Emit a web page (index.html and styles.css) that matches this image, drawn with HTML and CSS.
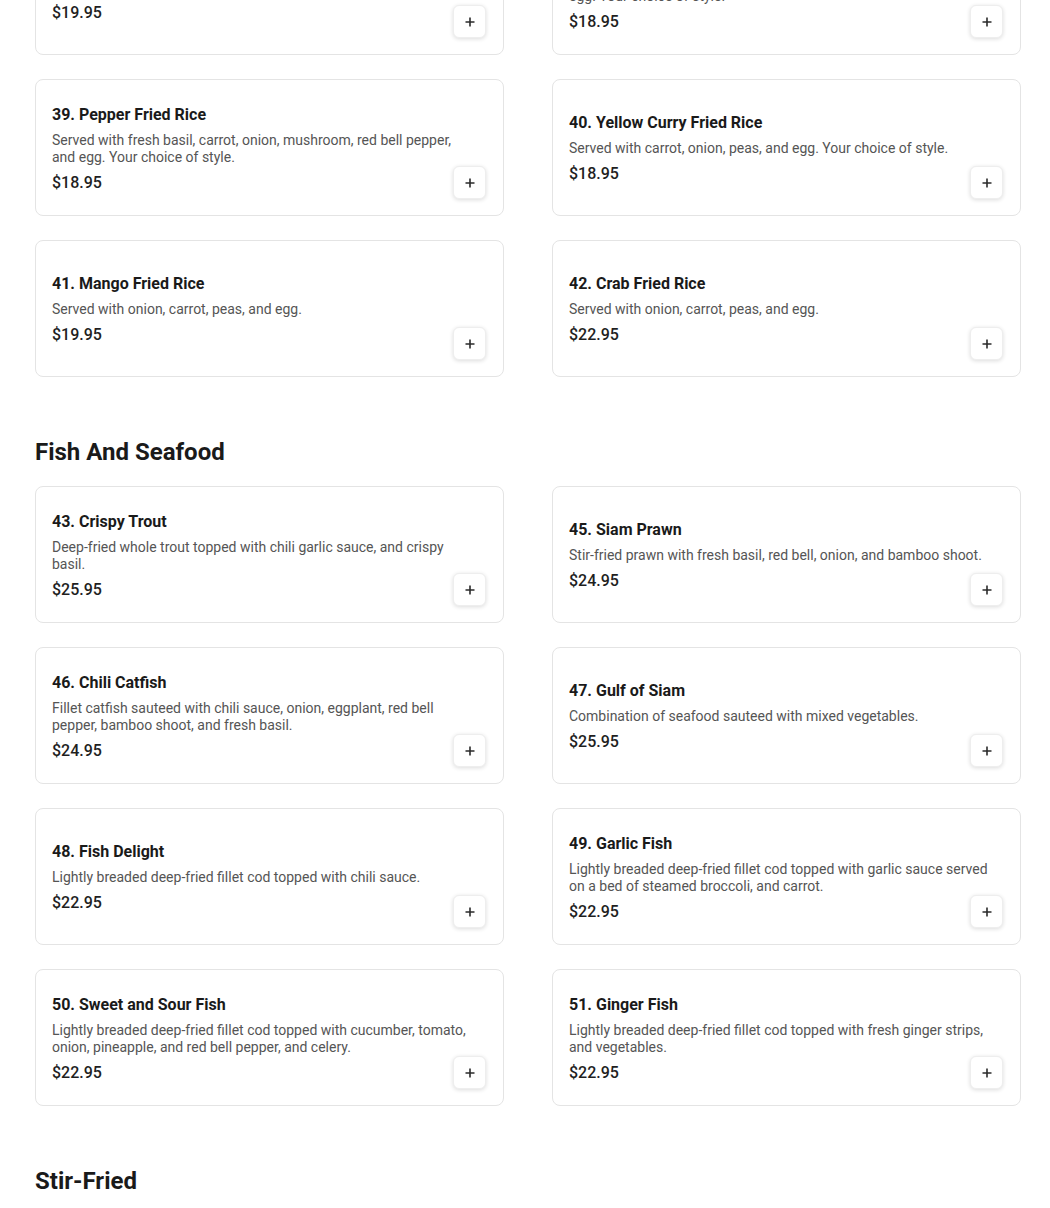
FILE: index.html
```html
<!DOCTYPE html>
<html lang="en">
<head>
<meta charset="utf-8">
<title>Menu</title>
<link rel="stylesheet" href="styles.css">
</head>
<body>
<main class="menu">
  <section class="section section-first">
    <div class="grid">
      <article class="card">
        <div class="info">
          <h3 class="name">37. Pineapple Fried Rice</h3>
          <p class="desc">Served with pineapple, cashew nut, onion, raisin, and egg.</p>
          <p class="price">$19.95</p>
        </div>
        <button class="add" aria-label="Add"><svg viewBox="0 0 12 12" width="12" height="12"><path d="M6 1.5v9M1.5 6h9" stroke="#2b2b2b" stroke-width="1.6" fill="none"/></svg></button>
      </article>
      <article class="card">
        <div class="info">
          <h3 class="name">38. Thai Fried Rice</h3>
          <p class="desc">Served with Chinese broccoli, onion, tomato, carrot, green onion, and egg. Your choice of style.</p>
          <p class="price">$18.95</p>
        </div>
        <button class="add" aria-label="Add"><svg viewBox="0 0 12 12" width="12" height="12"><path d="M6 1.5v9M1.5 6h9" stroke="#2b2b2b" stroke-width="1.6" fill="none"/></svg></button>
      </article>
      <article class="card">
        <div class="info">
          <h3 class="name">39. Pepper Fried Rice</h3>
          <p class="desc">Served with fresh basil, carrot, onion, mushroom, red bell pepper, and egg. Your choice of style.</p>
          <p class="price">$18.95</p>
        </div>
        <button class="add" aria-label="Add"><svg viewBox="0 0 12 12" width="12" height="12"><path d="M6 1.5v9M1.5 6h9" stroke="#2b2b2b" stroke-width="1.6" fill="none"/></svg></button>
      </article>
      <article class="card">
        <div class="info">
          <h3 class="name">40. Yellow Curry Fried Rice</h3>
          <p class="desc">Served with carrot, onion, peas, and egg. Your choice of style.</p>
          <p class="price">$18.95</p>
        </div>
        <button class="add" aria-label="Add"><svg viewBox="0 0 12 12" width="12" height="12"><path d="M6 1.5v9M1.5 6h9" stroke="#2b2b2b" stroke-width="1.6" fill="none"/></svg></button>
      </article>
      <article class="card">
        <div class="info">
          <h3 class="name">41. Mango Fried Rice</h3>
          <p class="desc">Served with onion, carrot, peas, and egg.</p>
          <p class="price">$19.95</p>
        </div>
        <button class="add" aria-label="Add"><svg viewBox="0 0 12 12" width="12" height="12"><path d="M6 1.5v9M1.5 6h9" stroke="#2b2b2b" stroke-width="1.6" fill="none"/></svg></button>
      </article>
      <article class="card">
        <div class="info">
          <h3 class="name">42. Crab Fried Rice</h3>
          <p class="desc">Served with onion, carrot, peas, and egg.</p>
          <p class="price">$22.95</p>
        </div>
        <button class="add" aria-label="Add"><svg viewBox="0 0 12 12" width="12" height="12"><path d="M6 1.5v9M1.5 6h9" stroke="#2b2b2b" stroke-width="1.6" fill="none"/></svg></button>
      </article>
    </div>
  </section>

  <section class="section">
    <h2 class="section-title">Fish And Seafood</h2>
    <div class="grid">
      <article class="card">
        <div class="info">
          <h3 class="name">43. Crispy Trout</h3>
          <p class="desc">Deep-fried whole trout topped with chili garlic sauce, and crispy basil.</p>
          <p class="price">$25.95</p>
        </div>
        <button class="add" aria-label="Add"><svg viewBox="0 0 12 12" width="12" height="12"><path d="M6 1.5v9M1.5 6h9" stroke="#2b2b2b" stroke-width="1.6" fill="none"/></svg></button>
      </article>
      <article class="card">
        <div class="info">
          <h3 class="name">45. Siam Prawn</h3>
          <p class="desc">Stir-fried prawn with fresh basil, red bell, onion, and bamboo shoot.</p>
          <p class="price">$24.95</p>
        </div>
        <button class="add" aria-label="Add"><svg viewBox="0 0 12 12" width="12" height="12"><path d="M6 1.5v9M1.5 6h9" stroke="#2b2b2b" stroke-width="1.6" fill="none"/></svg></button>
      </article>
      <article class="card">
        <div class="info">
          <h3 class="name">46. Chili Catfish</h3>
          <p class="desc">Fillet catfish sauteed with chili sauce, onion, eggplant, red bell pepper, bamboo shoot, and fresh basil.</p>
          <p class="price">$24.95</p>
        </div>
        <button class="add" aria-label="Add"><svg viewBox="0 0 12 12" width="12" height="12"><path d="M6 1.5v9M1.5 6h9" stroke="#2b2b2b" stroke-width="1.6" fill="none"/></svg></button>
      </article>
      <article class="card">
        <div class="info">
          <h3 class="name">47. Gulf of Siam</h3>
          <p class="desc">Combination of seafood sauteed with mixed vegetables.</p>
          <p class="price">$25.95</p>
        </div>
        <button class="add" aria-label="Add"><svg viewBox="0 0 12 12" width="12" height="12"><path d="M6 1.5v9M1.5 6h9" stroke="#2b2b2b" stroke-width="1.6" fill="none"/></svg></button>
      </article>
      <article class="card">
        <div class="info">
          <h3 class="name">48. Fish Delight</h3>
          <p class="desc">Lightly breaded deep-fried fillet cod topped with chili sauce.</p>
          <p class="price">$22.95</p>
        </div>
        <button class="add" aria-label="Add"><svg viewBox="0 0 12 12" width="12" height="12"><path d="M6 1.5v9M1.5 6h9" stroke="#2b2b2b" stroke-width="1.6" fill="none"/></svg></button>
      </article>
      <article class="card">
        <div class="info">
          <h3 class="name">49. Garlic Fish</h3>
          <p class="desc">Lightly breaded deep-fried fillet cod topped with garlic sauce served on a bed of steamed broccoli, and carrot.</p>
          <p class="price">$22.95</p>
        </div>
        <button class="add" aria-label="Add"><svg viewBox="0 0 12 12" width="12" height="12"><path d="M6 1.5v9M1.5 6h9" stroke="#2b2b2b" stroke-width="1.6" fill="none"/></svg></button>
      </article>
      <article class="card">
        <div class="info">
          <h3 class="name">50. Sweet and Sour Fish</h3>
          <p class="desc">Lightly breaded deep-fried fillet cod topped with cucumber, tomato, onion, pineapple, and red bell pepper, and celery.</p>
          <p class="price">$22.95</p>
        </div>
        <button class="add" aria-label="Add"><svg viewBox="0 0 12 12" width="12" height="12"><path d="M6 1.5v9M1.5 6h9" stroke="#2b2b2b" stroke-width="1.6" fill="none"/></svg></button>
      </article>
      <article class="card">
        <div class="info">
          <h3 class="name">51. Ginger Fish</h3>
          <p class="desc">Lightly breaded deep-fried fillet cod topped with fresh ginger strips, and vegetables.</p>
          <p class="price">$22.95</p>
        </div>
        <button class="add" aria-label="Add"><svg viewBox="0 0 12 12" width="12" height="12"><path d="M6 1.5v9M1.5 6h9" stroke="#2b2b2b" stroke-width="1.6" fill="none"/></svg></button>
      </article>
    </div>
  </section>

  <section class="section">
    <h2 class="section-title">Stir-Fried</h2>
  </section>
</main>
</body>
</html>
```

FILE: styles.css
```css
html, body {
  margin: 0;
  padding: 0;
  background: #ffffff;
  overflow: hidden;
}

body {
  font-family: Roboto, "Liberation Sans", Arial, sans-serif;
  color: #1a1a1a;
}

.menu {
  width: 986px;
  padding-left: 35px;
}

.section {
  padding-top: 59px;
}

.section-first {
  padding-top: 0;
  margin-top: -82px;
}

.section-title {
  margin: 0 0 18px;
  font-size: 24px;
  line-height: 32px;
  font-weight: 700;
  color: #1a1a1a;
}

.grid {
  display: grid;
  grid-template-columns: 1fr 1fr;
  column-gap: 48px;
  row-gap: 24px;
}

.card {
  display: grid;
  grid-template-columns: 1fr;
  grid-template-rows: 1fr;
  box-sizing: border-box;
  min-height: 137px;
  padding: 16px;
  border: 1px solid #e4e4e4;
  border-radius: 8px;
  background: #fff;
}

.info {
  grid-area: 1 / 1;
  align-self: center;
  padding-top: 2px;
  padding-right: 10px;
}

.name {
  margin: 0;
  font-size: 16px;
  line-height: 24px;
  font-weight: 700;
  color: #1a1a1a;
}

.desc {
  margin: 5px 0 0;
  font-size: 14px;
  line-height: 17px;
  color: #555555;
}

.price {
  margin: 5px 0 0;
  font-size: 16px;
  line-height: 24px;
  font-weight: 500;
  color: #1f1f1f;
}

.add {
  grid-area: 1 / 1;
  justify-self: end;
  align-self: end;
  width: 33px;
  height: 33px;
  margin-right: 1px;
  padding: 0;
  display: flex;
  align-items: center;
  justify-content: center;
  background: #fff;
  border: 1px solid #eeeeee;
  border-radius: 6px;
  box-shadow: 0 1px 4px rgba(0, 0, 0, 0.14);
  cursor: pointer;
}

.add svg {
  display: block;
}
```
